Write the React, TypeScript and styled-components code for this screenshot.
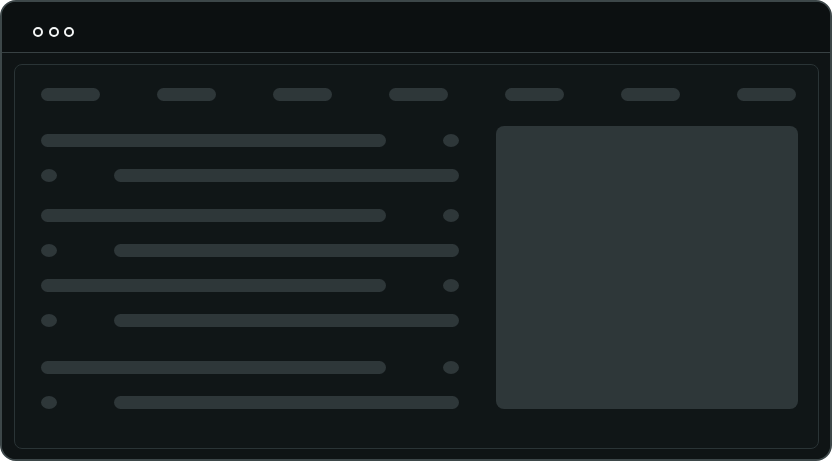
import styled, { createGlobalStyle } from 'styled-components'

const GlobalStyle = createGlobalStyle`
  html, body {
    margin: 0;
    padding: 0;
    background: #ffffff;
    font-family: "Liberation Sans", Arial, sans-serif;
  }
  * {
    box-sizing: border-box;
  }
`

const navItems = [0, 1, 2, 3, 4, 5, 6]

// gap above each group of two rows, read off the reference
const groups = [0, 27, 22, 34]

export default function App() {
  return (
    <>
      <GlobalStyle />
      <Window>
        <TitleBar>
          <Dot />
          <Dot />
          <Dot />
        </TitleBar>
        <Body>
          <Panel>
            <Nav>
              {navItems.map((i) => (
                <NavPill key={i} />
              ))}
            </Nav>
            <Content>
              <List>
                {groups.map((gap, i) => (
                  <Group key={i} $gap={gap}>
                    <Row>
                      <Bar />
                      <Knob />
                    </Row>
                    <Row>
                      <Knob />
                      <Bar />
                    </Row>
                  </Group>
                ))}
              </List>
              <Preview />
            </Content>
          </Panel>
        </Body>
      </Window>
    </>
  )
}

const Window = styled.div`
  width: 832px;
  height: 461px;
  border: 2px solid #3d4749;
  border-radius: 16px;
  background: linear-gradient(180deg, #0d1112 0%, #101516 100%);
  display: flex;
  flex-direction: column;
  overflow: hidden;
`

const TitleBar = styled.div`
  height: 51px;
  flex-shrink: 0;
  padding: 25px 0 0 31px;
  display: flex;
  align-items: flex-start;
  gap: 5.5px;
  background: #0c1011;
  border-bottom: 1px solid #384143;
`

const Dot = styled.span`
  width: 10px;
  height: 10px;
  border-radius: 50%;
  border: 2px solid #f4f6f6;
`

const Body = styled.div`
  flex: 1;
  display: flex;
  padding: 11px 11px 10px 12px;
  background: #0f1415;
`

const Panel = styled.div`
  flex: 1;
  border: 1px solid #2a3436;
  border-radius: 8px;
  background: #101617;
  padding: 23px 19px 0 26px;
  display: flex;
  flex-direction: column;
`

const Nav = styled.div`
  display: flex;
  justify-content: space-between;
  padding-right: 3px;
`

const NavPill = styled.span`
  width: 59px;
  height: 13px;
  border-radius: 7px;
  background: #2e3739;
`

const Content = styled.div`
  margin-top: 25px;
  display: flex;
  gap: 37px;
`

const List = styled.div`
  width: 418px;
  padding-top: 8px;
  display: flex;
  flex-direction: column;
`

const Group = styled.div<{ $gap: number }>`
  margin-top: ${(p) => p.$gap}px;
  display: flex;
  flex-direction: column;
  gap: 22px;
`

const Row = styled.div`
  height: 13px;
  display: flex;
  justify-content: space-between;
`

const Bar = styled.span`
  width: 345px;
  height: 13px;
  border-radius: 7px;
  background: #2e3739;
`

const Knob = styled.span`
  width: 16px;
  height: 13px;
  border-radius: 50%;
  background: #2e3739;
`

const Preview = styled.div`
  width: 302px;
  height: 283px;
  border-radius: 8px;
  background: #2e3739;
`
